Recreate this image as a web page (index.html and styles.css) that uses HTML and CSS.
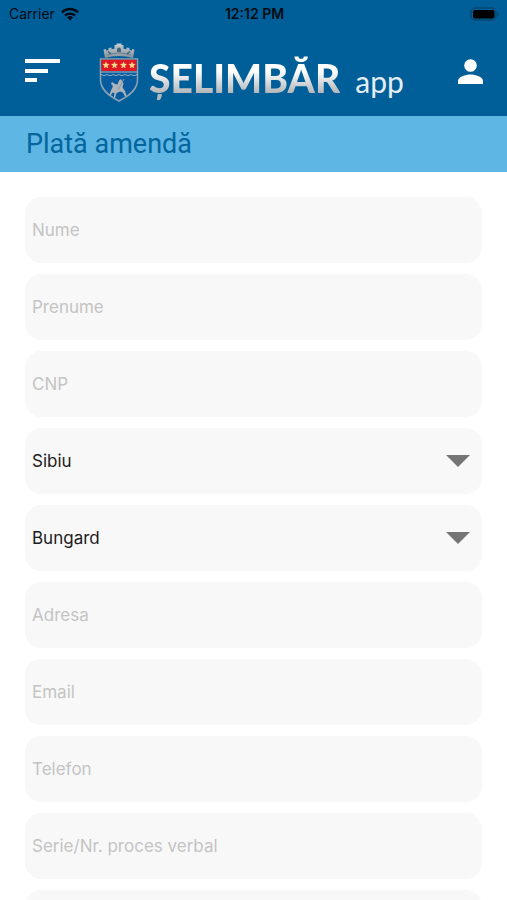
FILE: index.html
```html
<!DOCTYPE html>
<html lang="ro">
<head>
<meta charset="utf-8">
<meta name="viewport" content="width=device-width, initial-scale=1">
<title>Plată amendă</title>
<link rel="stylesheet" href="styles.css">
</head>
<body>
<div class="app">
  <header class="header">
    <div class="status">
      <div class="carrier">
        <span>Carrier</span>
        <svg class="wifi" viewBox="0 0 18 14" aria-hidden="true">
          <g fill="none" stroke="#020b14" stroke-width="2.4">
            <path d="M1 5.3a11.5 11.5 0 0 1 16 0"/>
            <path d="M4 8.6a7.2 7.2 0 0 1 10 0"/>
          </g>
          <path d="M9 13.6 6 10.4a4.3 4.3 0 0 1 6 0z" fill="#020b14"/>
        </svg>
      </div>
      <span class="time">12:12 PM</span>
      <svg class="battery" viewBox="0 0 30 14" aria-hidden="true">
        <rect x="1" y="1" width="25" height="12" rx="4" fill="none" stroke="#054873" stroke-width="1.5"/>
        <rect x="3" y="3" width="21.500" height="8.500" rx="2" fill="#000"/>
        <path d="M27.500 5v4.500c2-1 2-3.500 0-4.500z" fill="#054873"/>
      </svg>
    </div>
    <div class="bar">
      <button class="icon-button" type="button" aria-label="Meniu">
        <svg class="menu-icon" viewBox="0 0 35 24" aria-hidden="true">
          <path d="M0 0h35v4H0zM0 10h23v4H0zM0 19h12v4H0z" fill="#fff"/>
        </svg>
      </button>
      <div class="brand">
        <svg class="crest" viewBox="0 0 40 60" aria-hidden="true">
          <defs>
            <linearGradient id="silver" x1="0" y1="0" x2="0" y2="1">
              <stop offset="0" stop-color="#c5cdd2"/>
              <stop offset="1" stop-color="#85939d"/>
            </linearGradient>
            <path id="star" d="m0-3.500 1 2.300 2.500.2L1.600.7l.6 2.500L0 1.900l-2.200 1.300.6-2.500L-3.500-1l2.500-.2z"/>
          </defs>
          <path d="M6 15 4.500 6.500 7 6v1.500l2.500-.6V5l3-.6v1.800l3-.5V2h2V.5h5V2h2v3.700l3 .5V4.400l3 .6v1.900l2.500.6V6l2.500.5L34 15q-14-4-28 0z" fill="url(#silver)"/>
          <path d="M8 12q12-4 24 0" fill="none" stroke="#6b7f8d" stroke-width="1"/>
          <path d="M18 9V6.500a2 2 0 0 1 4 0V9z" fill="#43647b"/>
          <path d="m9 8.500 3 2.500M31 8.500l-3 2.500" stroke="#38637f" stroke-width="1.500"/>
          <path d="M1.500 16h37v21c0 9-7 15-18.500 21C8.500 52 1.500 46 1.500 37z" fill="#075c9f" stroke="#8ba3b4" stroke-width="1.500"/>
          <path d="M2.500 16.800h35V28h-35z" fill="#df1823"/>
          <g fill="#ffd88a">
            <use href="#star" x="7" y="22"/>
            <use href="#star" x="15.500" y="22"/>
            <use href="#star" x="24.500" y="22"/>
            <use href="#star" x="33" y="22"/>
          </g>
          <path d="M2 29h36" stroke="#a9b6be" stroke-width="1"/>
          <path d="m2 31.500 3 1.200 3-1.200 3 1.200 3-1.200 3 1.200 3-1.200 3 1.200 3-1.200 3 1.200 3-1.200 3 1.200 3-1.200" fill="none" stroke="#8dabc0" stroke-width="1"/>
          <path d="m20 37.500 2-1.500 1 2 1.500 2.500-1 4 2.500 3.500 1.500 5-1.500.5-2-4-3-1-3.500 1.500-1.500 5-1.200-.4.700-4.600-2-.5-2 3-1-.8 1.500-4.200 2-4.500-2-2 1-2 3 2 2.500.5z" fill="#aeb4b9"/>
          <path d="m25 36-6 11" stroke="#8797a2" stroke-width="1"/>
        </svg>
        <div class="brand-text">
          <span class="brand-name">ȘELIMBĂR</span>
          <span class="brand-app">app</span>
        </div>
      </div>
      <button class="icon-button" type="button" aria-label="Cont">
        <svg class="user-icon" viewBox="0 0 25 25" aria-hidden="true">
          <circle cx="12.500" cy="6.500" r="6.300" fill="#fff"/>
          <path d="M0 25v-3c0-4.200 7.500-6.500 12.500-6.500S25 17.800 25 22v3z" fill="#fff"/>
        </svg>
      </button>
    </div>
  </header>
  <h1 class="title">Plată amendă</h1>
  <main class="content">
    <form class="form">
      <input class="field" type="text" placeholder="Nume" aria-label="Nume">
      <input class="field" type="text" placeholder="Prenume" aria-label="Prenume">
      <input class="field" type="text" placeholder="CNP" aria-label="CNP">
      <div class="select">
        <select class="field" aria-label="Județ"><option>Sibiu</option></select>
        <svg class="arrow" viewBox="0 0 24 12" aria-hidden="true"><path d="M0 0h24L12 12z" fill="#757575"/></svg>
      </div>
      <div class="select">
        <select class="field" aria-label="Localitate"><option>Bungard</option></select>
        <svg class="arrow" viewBox="0 0 24 12" aria-hidden="true"><path d="M0 0h24L12 12z" fill="#757575"/></svg>
      </div>
      <input class="field" type="text" placeholder="Adresa" aria-label="Adresa">
      <input class="field" type="email" placeholder="Email" aria-label="Email">
      <input class="field" type="tel" placeholder="Telefon" aria-label="Telefon">
      <input class="field" type="text" placeholder="Serie/Nr. proces verbal" aria-label="Serie/Nr. proces verbal">
      <input class="field" type="text" aria-label="Suma">
    </form>
  </main>
</div>
</body>
</html>
```
FILE: styles.css
```css
* {
  box-sizing: border-box;
}

body {
  margin: 0;
  background: #fff;
  font-family: Inter, "Liberation Sans", sans-serif;
}

.app {
  display: flex;
  flex-direction: column;
  height: 100vh;
}

.header {
  flex: none;
  background: #005f98;
}

.status {
  display: grid;
  grid-template-columns: 1fr auto 1fr;
  align-items: center;
  height: 28px;
  padding: 0 7px 0 9px;
  color: #020b14;
  font-size: 14px;
  line-height: 16px;
}

.carrier {
  display: flex;
  align-items: center;
  gap: 6px;
}

.wifi {
  width: 18px;
  height: 14px;
}

.time {
  font-weight: 600;
}

.battery {
  justify-self: end;
  width: 30px;
  height: 14px;
}

.bar {
  display: flex;
  align-items: center;
  height: 88px;
  padding: 0 24px 2px 25px;
}

.icon-button {
  display: flex;
  flex: none;
  padding: 0;
  border: 0;
  background: none;
}

.menu-icon {
  width: 35px;
  height: 24px;
}

.user-icon {
  width: 25px;
  height: 25px;
}

.brand {
  display: flex;
  flex: 1;
  align-items: center;
  gap: 10px;
  padding: 4px 0 0 39px;
  white-space: nowrap;
}

.crest {
  flex: none;
  width: 40px;
  height: 60px;
}

.brand-text {
  display: flex;
  align-items: baseline;
  gap: 15px;
  padding-top: 10px;
}

.brand-name {
  background: linear-gradient(#fff 35%, #b4b8bc 80%);
  background-clip: text;
  color: transparent;
  font-family: Lato, sans-serif;
  font-size: 39px;
  font-weight: 900;
  line-height: 48px;
}

.brand-app {
  color: #e4edf3;
  font-family: Lato, sans-serif;
  font-size: 30px;
  line-height: 36px;
}

.title {
  flex: none;
  margin: 0;
  padding: 0 26px;
  background: #5db6e4;
  color: #05659d;
  font-family: Roboto, sans-serif;
  font-size: 27px;
  font-weight: 400;
  line-height: 56px;
}

.content {
  flex: 1;
  min-height: 0;
  overflow-y: auto;
  scrollbar-width: none;
}

.form {
  display: flex;
  flex-direction: column;
  gap: 11px;
  padding: 25px;
}

.field {
  display: block;
  flex: none;
  width: 100%;
  height: 66px;
  padding: 0 7px;
  border: 0;
  border-radius: 16px;
  background: #f8f8f8;
  color: #1c1c1c;
  font-family: inherit;
  font-size: 17px;
  appearance: none;
}

.field::placeholder {
  color: #c4c4c4;
  opacity: 1;
}

.select {
  display: grid;
  align-items: center;
}

.select > * {
  grid-area: 1 / 1;
}

.arrow {
  justify-self: end;
  width: 24px;
  height: 12px;
  margin-right: 12px;
  pointer-events: none;
}
```
